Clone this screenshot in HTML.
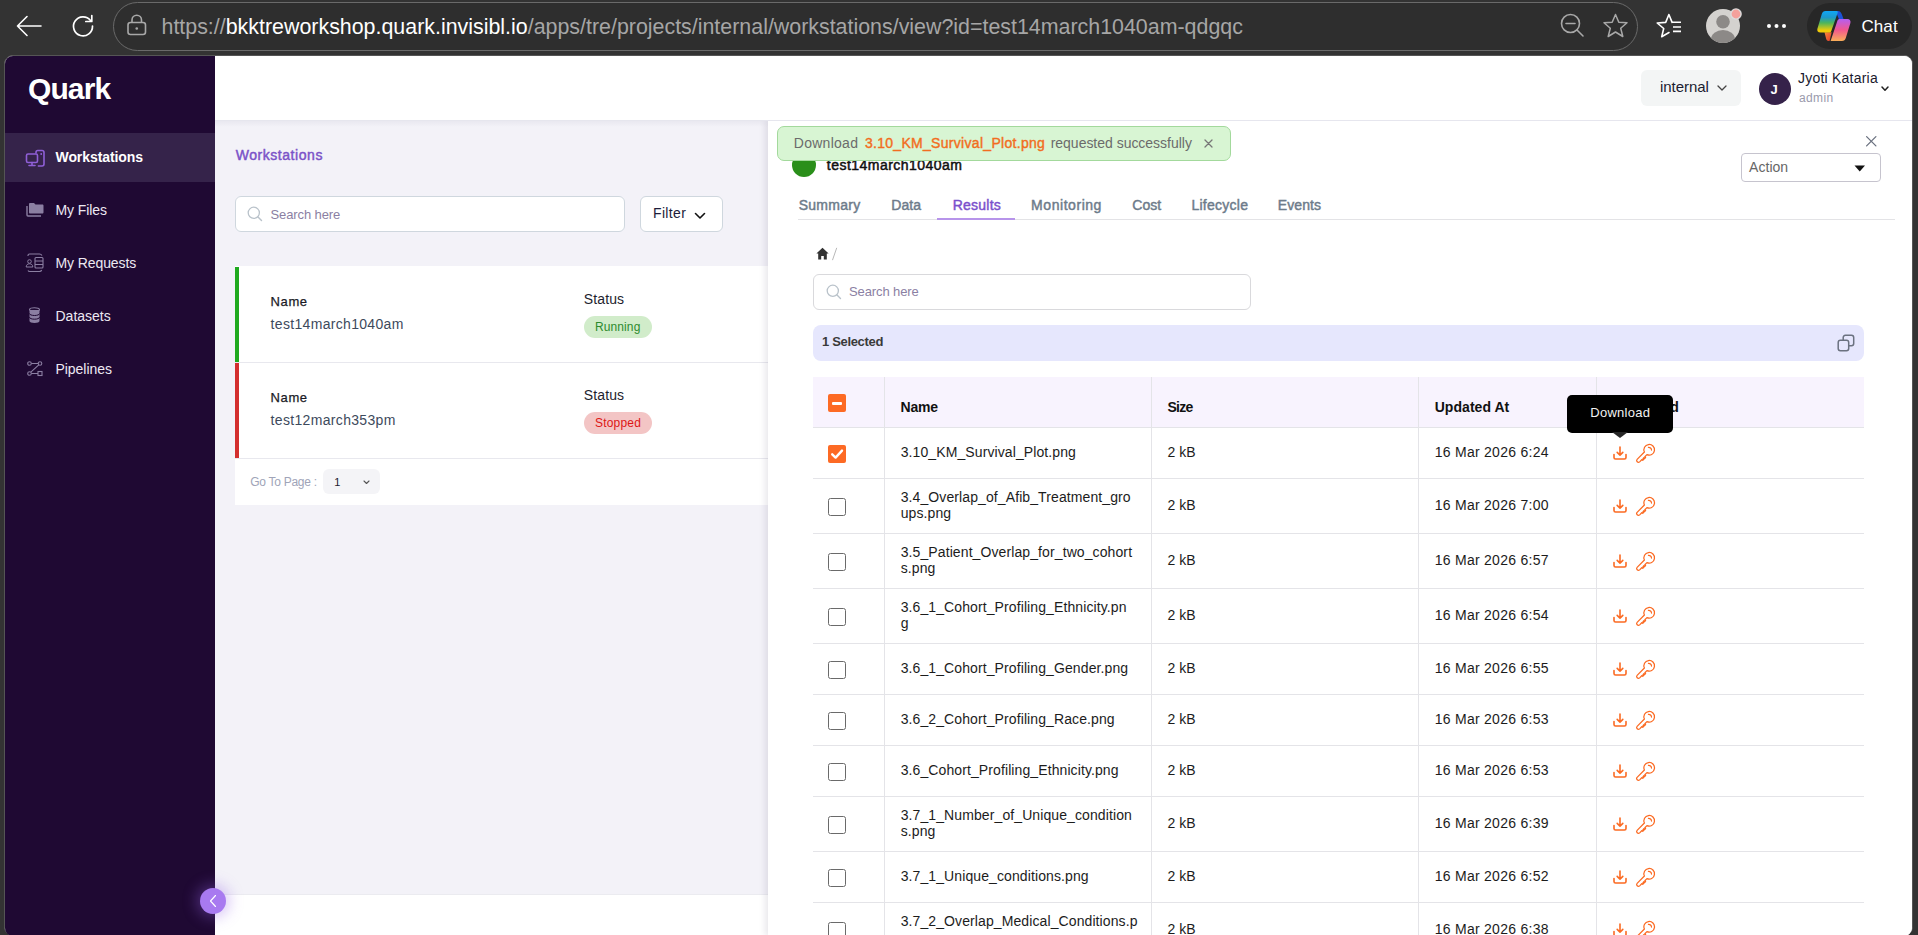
<!DOCTYPE html>
<html><head><meta charset="utf-8"><style>
html,body{margin:0;padding:0;}
body{width:1918px;height:935px;position:relative;overflow:hidden;background:#333333;font-family:"Liberation Sans", sans-serif;}
.t{position:absolute;line-height:1;white-space:pre;}
svg{overflow:visible}
</style></head><body>
<div style="position:absolute;left:0px;top:0px;width:1918px;height:56px;background:#333333"></div><svg style="position:absolute;left:16px;top:15px" width="26" height="22" viewBox="0 0 26 22"><path d="M1.5 11 H25 M11 1.5 L1.5 11 L11 20.5" fill="none" stroke="#ffffff" stroke-width="1.6" stroke-linecap="round" stroke-linejoin="round"/></svg><svg style="position:absolute;left:71px;top:14px" width="24" height="24" viewBox="0 0 24 24"><path d="M19.5 6.5 A9.5 9.5 0 1 0 21.5 12" fill="none" stroke="#ffffff" stroke-width="1.7" stroke-linecap="round"/><path d="M20.8 1.5 V7.5 H14.8" fill="none" stroke="#ffffff" stroke-width="1.7" stroke-linecap="round" stroke-linejoin="round"/></svg><div style="position:absolute;left:113px;top:2px;width:1525px;height:48.5px;box-sizing:border-box;border:1.8px solid #6a6a6a;border-radius:24.5px;background:#2e2e2e"></div><svg style="position:absolute;left:127px;top:14px" width="20" height="22" viewBox="0 0 20 22"><rect x="1" y="8.5" width="17.5" height="12" rx="2.5" fill="none" stroke="#a8a8a8" stroke-width="1.6"/><path d="M5 8.5 V6 A4.75 4.75 0 0 1 14.5 6 V8.5" fill="none" stroke="#a8a8a8" stroke-width="1.6"/><circle cx="9.75" cy="14.5" r="1.3" fill="#a8a8a8"/></svg><div class="t" style="left:161.5px;top:16.68px;font-size:21.4px;color:#a6a6a6;font-weight:400;letter-spacing:0px;"><span style="color:#a6a6a6">https://</span><span style="color:#ffffff">bkktreworkshop.quark.invisibl.io</span><span style="color:#a6a6a6">/apps/tre/projects/internal/workstations/view?id=test14march1040am-qdgqc</span></div><svg style="position:absolute;left:1560px;top:13px" width="26" height="26" viewBox="0 0 26 26"><circle cx="10.5" cy="10.5" r="9" fill="none" stroke="#a8a8a8" stroke-width="1.6"/><path d="M6 10.5 H15 M17 17 L23 23" fill="none" stroke="#a8a8a8" stroke-width="1.6" stroke-linecap="round"/></svg><svg style="position:absolute;left:1602px;top:13px" width="27" height="26" viewBox="0 0 27 26"><path d="M13.5 1.5 L16.8 9.2 L25 9.8 L18.7 15.2 L20.8 23.5 L13.5 19 L6.2 23.5 L8.3 15.2 L2 9.8 L10.2 9.2 Z" fill="none" stroke="#a8a8a8" stroke-width="1.5" stroke-linejoin="round"/></svg><svg style="position:absolute;left:1650px;top:10px" width="36" height="32" viewBox="0 0 36 32"><path d="M22.1 12.35 L18.9 4.5 L15.7 12.35 L7.2 13 L13.7 18.5 L11.7 26.75 L19 22.5" fill="none" stroke="#ffffff" stroke-width="1.6" stroke-linejoin="round" stroke-linecap="round"/><path d="M22 12.3 H31 M23 17 H31 M23 21.4 H31" stroke="#ffffff" stroke-width="1.6"/></svg><svg style="position:absolute;left:1705px;top:8px" width="36" height="36" viewBox="0 0 36 36"><defs><clipPath id="avc"><circle cx="18" cy="18" r="17"/></clipPath></defs><circle cx="18" cy="18" r="17" fill="#d4d2cf"/><g clip-path="url(#avc)"><circle cx="18" cy="13.8" r="6.8" fill="#8c8987"/><ellipse cx="18" cy="31.5" rx="12" ry="9.5" fill="#8c8987"/></g><circle cx="31" cy="6" r="5.8" fill="#dcdcdc"/><circle cx="31" cy="6" r="4.4" fill="#f4a19c"/></svg><svg style="position:absolute;left:1766px;top:23px" width="22" height="6" viewBox="0 0 22 6"><circle cx="3" cy="3" r="2" fill="#fff"/><circle cx="10.5" cy="3" r="2" fill="#fff"/><circle cx="18" cy="3" r="2" fill="#fff"/></svg><div style="position:absolute;left:1807px;top:3px;width:105px;height:46px;background:#272727;border-radius:23px"></div><svg style="position:absolute;left:1812px;top:6px" width="44" height="40" viewBox="0 0 44 40"><defs>
<linearGradient id="cg1" x1="0" y1="0" x2="0" y2="1"><stop offset="0" stop-color="#10a6f6"/><stop offset="0.3" stop-color="#1d98c9"/><stop offset="0.55" stop-color="#4db55c"/><stop offset="0.9" stop-color="#f2cc08"/></linearGradient>
<linearGradient id="cg2" x1="0" y1="0" x2="0" y2="1"><stop offset="0" stop-color="#b45ef2"/><stop offset="0.5" stop-color="#f2588e"/><stop offset="1" stop-color="#f9ae58"/></linearGradient>
<linearGradient id="cg3" x1="0" y1="0" x2="1" y2="1"><stop offset="0" stop-color="#fb8a3c"/><stop offset="1" stop-color="#e23a2a"/></linearGradient>
</defs>
<path d="M23.8 5 H26 C28 5 29.2 6.5 30 8.8 L31.6 13.2 H27 L24.6 7.4 Z" fill="#1c52d8"/>
<path d="M12.5 26.3 H19.6 L17.6 35 H16.6 C15.3 35 14.6 34.3 14.2 33 Z" fill="url(#cg3)"/>
<path d="M13.5 5 H24.5 C25.5 5 26 5.8 25.7 6.8 L19.3 25 C18.9 26 18 26.6 17 26.6 H8.5 C6 26.6 4.8 24.8 5.4 22.8 L9.8 8 C10.4 6 11.6 5 13.5 5 Z" fill="url(#cg1)"/>
<path d="M28 13 H35.5 C37.8 13 39 14.8 38.4 17 L33.8 32 C33.2 34 32 35 30 35 H18.6 L25.5 14.5 C25.8 13.6 26.6 13 28 13 Z" fill="url(#cg2)"/></svg><div class="t" style="left:1861.4px;top:18.21px;font-size:17px;color:#ffffff;font-weight:400;letter-spacing:0.1px;">Chat</div><div style="position:absolute;left:4px;top:55px;width:1909px;height:881px;box-sizing:border-box;border:1px solid #555555;border-radius:9px;background:#ffffff"></div><div style="position:absolute;left:0;top:0;width:1918px;height:935px;clip-path:inset(56px 6px -1px 5px round 8px)"><div style="position:absolute;left:5px;top:56px;width:210px;height:880px;background:#1f0933"></div><div class="t" style="left:28.0px;top:73.61px;font-size:30px;color:#ffffff;font-weight:700;letter-spacing:-0.9px;">Quark</div><div style="position:absolute;left:5px;top:133px;width:210px;height:49px;background:#35234a"></div><svg style="position:absolute;left:25px;top:149px" width="21" height="18" viewBox="0 0 21 18"><rect x="1.5" y="5" width="11" height="8.5" rx="1.5" fill="none" stroke="#8f5fd6" stroke-width="1.6"/><path d="M7 13.5 V16 M4 16.5 H10" stroke="#8f5fd6" stroke-width="1.6" stroke-linecap="round"/><path d="M11 4.6 V3.2 C11 2.2 11.7 1.5 12.7 1.5 H17 C18.3 1.5 19 2.2 19 3.5 V15 C19 16.3 18.3 17 17 17 H12.8" fill="none" stroke="#8f5fd6" stroke-width="1.6"/><rect x="15.5" y="4" width="1.4" height="2" fill="#8f5fd6"/></svg><div class="t" style="left:55.5px;top:150.15px;font-size:14px;color:#ffffff;font-weight:700;letter-spacing:-0.08px;">Workstations</div><svg style="position:absolute;left:26px;top:202px" width="18" height="15" viewBox="0 0 18 15"><path d="M4 1 H8 L9.5 2.5 H16.5 C17 2.5 17.5 3 17.5 3.5 V10.5 C17.5 11 17 11.5 16.5 11.5 H4 C3.5 11.5 3 11 3 10.5 V2 C3 1.5 3.5 1 4 1 Z" fill="#8b7fa2"/><path d="M1 4 V13 C1 13.6 1.4 14 2 14 H15" fill="none" stroke="#8b7fa2" stroke-width="1.4"/></svg><div class="t" style="left:55.5px;top:203.15px;font-size:14px;color:#ece8f2;font-weight:400;letter-spacing:-0.08px;">My Files</div><svg style="position:absolute;left:25px;top:253px" width="20" height="19" viewBox="0 0 20 19"><path d="M3 3 V2.5 C3 1.7 3.7 1 4.5 1 H14.5 C15.5 1 16.5 1.7 17 2.5" fill="none" stroke="#8b7fa2" stroke-width="1.1"/><path d="M3 17.5 C3.3 18.2 4 18.5 4.8 18.5 H14.5 C15.5 18.5 16.3 18 16.7 17" fill="none" stroke="#8b7fa2" stroke-width="1.1"/><circle cx="4.5" cy="8.5" r="1.8" fill="none" stroke="#8b7fa2" stroke-width="1"/><path d="M1.2 14 C1.2 11.8 2.7 10.8 4.5 10.8 C6.3 10.8 7.8 11.8 7.8 14 Z" fill="none" stroke="#8b7fa2" stroke-width="1"/><rect x="10" y="4.5" width="8" height="10.5" rx="1" fill="none" stroke="#8b7fa2" stroke-width="1.1"/><path d="M10 8 H18 M10 11.5 H18" stroke="#8b7fa2" stroke-width="1.1"/></svg><div class="t" style="left:55.5px;top:256.15px;font-size:14px;color:#ece8f2;font-weight:400;letter-spacing:-0.1px;">My Requests</div><svg style="position:absolute;left:28px;top:307px" width="13" height="17" viewBox="0 0 13 17"><ellipse cx="6.5" cy="2.5" rx="5" ry="1.8" fill="none" stroke="#8b7fa2" stroke-width="1.1"/><path d="M1.5 3 V14 C1.5 15.2 3.7 16 6.5 16 C9.3 16 11.5 15.2 11.5 14 V3" fill="#8b7fa2"/><path d="M1.5 6.5 C1.5 7.7 3.7 8.5 6.5 8.5 C9.3 8.5 11.5 7.7 11.5 6.5 M1.5 10.2 C1.5 11.4 3.7 12.2 6.5 12.2 C9.3 12.2 11.5 11.4 11.5 10.2" fill="none" stroke="#1f0933" stroke-width="1"/></svg><div class="t" style="left:55.5px;top:309.15px;font-size:14px;color:#ece8f2;font-weight:400;letter-spacing:0px;">Datasets</div><svg style="position:absolute;left:27px;top:361px" width="16" height="16" viewBox="0 0 16 16"><circle cx="2.5" cy="2.5" r="1.8" fill="none" stroke="#8b7fa2" stroke-width="1.1"/><circle cx="13" cy="2.5" r="1.8" fill="none" stroke="#8b7fa2" stroke-width="1.1"/><circle cx="2.5" cy="12.5" r="1.8" fill="none" stroke="#8b7fa2" stroke-width="1.1"/><rect x="11" y="10.5" width="4" height="4" fill="none" stroke="#8b7fa2" stroke-width="1.1"/><path d="M4.3 2.5 H11.2 M11.8 3.8 L3.8 11.2 M4.3 12.5 H11" stroke="#8b7fa2" stroke-width="1.1"/></svg><div class="t" style="left:55.5px;top:362.15px;font-size:14px;color:#ece8f2;font-weight:400;letter-spacing:-0.05px;">Pipelines</div><div style="position:absolute;left:215px;top:121px;width:553px;height:773px;background:#f3f2f8"></div><div style="position:absolute;left:215px;top:121px;width:553px;height:6px;background:linear-gradient(#e9e8f0,rgba(243,242,248,0))"></div><div style="position:absolute;left:215px;top:894px;width:553px;height:41px;background:#ffffff;border-top:1px solid #ebebf0"></div><div class="t" style="left:235.7px;top:147.95px;font-size:14px;color:#7b52c8;font-weight:400;letter-spacing:0.55px;-webkit-text-stroke:0.45px currentColor;">Workstations</div><div style="position:absolute;left:235px;top:196px;width:390px;height:36px;box-sizing:border-box;background:#fff;border:1px solid #cfd7de;border-radius:6px"></div><svg style="position:absolute;left:247px;top:206px" width="16" height="16" viewBox="0 0 16 16"><circle cx="6.8" cy="6.8" r="5.6" fill="none" stroke="#b9c2ca" stroke-width="1.3"/><path d="M11 11 L14.5 14.5" stroke="#b9c2ca" stroke-width="1.4" stroke-linecap="round"/></svg><div class="t" style="left:270.5px;top:208.10px;font-size:13px;color:#8b7fa3;font-weight:400;letter-spacing:-0.1px;">Search here</div><div style="position:absolute;left:640px;top:196px;width:83px;height:36px;box-sizing:border-box;background:#fff;border:1px solid #cfd7de;border-radius:6px"></div><div class="t" style="left:653.0px;top:206.35px;font-size:14px;color:#1c1c3a;font-weight:400;letter-spacing:0.35px;">Filter</div><svg style="position:absolute;left:694px;top:212px" width="12" height="8" viewBox="0 0 12 8"><path d="M1.5 1.5 L6 6 L10.5 1.5" fill="none" stroke="#111" stroke-width="1.6" stroke-linecap="round" stroke-linejoin="round"/></svg><div style="position:absolute;left:235px;top:266px;width:533px;height:239px;background:#ffffff"></div><div style="position:absolute;left:235px;top:266.5px;width:4px;height:95.5px;background:#1faa1f"></div><div style="position:absolute;left:235px;top:362px;width:533px;height:1px;background:#e8e8ee"></div><div style="position:absolute;left:235px;top:363px;width:4px;height:95px;background:#d32f2f"></div><div style="position:absolute;left:235px;top:458px;width:533px;height:1px;background:#e8e8ee"></div><div class="t" style="left:270.6px;top:295.00px;font-size:13px;color:#1a1a26;font-weight:400;letter-spacing:0.6px;-webkit-text-stroke:0.25px currentColor;">Name</div><div class="t" style="left:270.6px;top:316.95px;font-size:14px;color:#3d4a5c;font-weight:400;letter-spacing:0.32px;">test14march1040am</div><div class="t" style="left:583.8px;top:292.25px;font-size:14px;color:#1e1e2e;font-weight:400;letter-spacing:0.12px;">Status</div><div style="position:absolute;left:584px;top:316px;width:68px;height:22px;background:#d1ecca;border-radius:11px"></div><div class="t" style="left:595.0px;top:320.84px;font-size:12px;color:#2e8b2e;font-weight:400;letter-spacing:0.1px;">Running</div><div class="t" style="left:270.6px;top:391.30px;font-size:13px;color:#1a1a26;font-weight:400;letter-spacing:0.6px;-webkit-text-stroke:0.25px currentColor;">Name</div><div class="t" style="left:270.6px;top:413.45px;font-size:14px;color:#3d4a5c;font-weight:400;letter-spacing:0.33px;">test12march353pm</div><div class="t" style="left:583.8px;top:388.15px;font-size:14px;color:#1e1e2e;font-weight:400;letter-spacing:0.12px;">Status</div><div style="position:absolute;left:584px;top:412px;width:68px;height:22px;background:#f3c5c5;border-radius:11px"></div><div class="t" style="left:595.0px;top:416.84px;font-size:12px;color:#dd1515;font-weight:400;letter-spacing:0.2px;">Stopped</div><div class="t" style="left:250.3px;top:475.84px;font-size:12px;color:#a0a4b8;font-weight:400;letter-spacing:-0.28px;">Go To Page :</div><div style="position:absolute;left:323px;top:469px;width:57px;height:25px;background:#f4f4f7;border-radius:6px"></div><div class="t" style="left:334.3px;top:477.19px;font-size:11px;color:#1e2030;font-weight:400;letter-spacing:0px;">1</div><svg style="position:absolute;left:362.5px;top:480px" width="7" height="5" viewBox="0 0 7 5"><path d="M1 1 L3.5 3.5 L6 1" fill="none" stroke="#555" stroke-width="1.1" stroke-linecap="round" stroke-linejoin="round"/></svg><div style="position:absolute;left:200px;top:888px;width:26px;height:26px;background:#a87af0;border-radius:50%;box-shadow:0 0 14px 4px rgba(150,100,230,0.35)"></div><svg style="position:absolute;left:209px;top:894px" width="10" height="14" viewBox="0 0 10 14"><path d="M6.5 1.5 L1.5 7 L6.5 12.5" fill="none" stroke="#fff" stroke-width="1.15" stroke-linecap="round" stroke-linejoin="round"/></svg><div style="position:absolute;left:768px;top:121px;width:1145px;height:815px;background:#ffffff;box-shadow:-3px 0 6px rgba(40,30,70,0.10)"></div><div style="position:absolute;left:792px;top:153px;width:24px;height:24px;background:#2a8f1a;border-radius:50%"></div><div class="t" style="left:826.8px;top:157.85px;font-size:14px;color:#111111;font-weight:400;letter-spacing:0.47px;-webkit-text-stroke:0.5px currentColor;">test14march1040am</div><div style="position:absolute;left:777px;top:126px;width:454px;height:35px;box-sizing:border-box;background:#d8f5d3;border:1px solid #a3d99c;border-radius:7px"></div><div class="t" style="left:793.8px;top:136.15px;font-size:14px;color:#6b6b6b;font-weight:400;letter-spacing:0.27px;">Download</div><div class="t" style="left:864.9px;top:136.15px;font-size:14px;color:#f26d21;font-weight:400;letter-spacing:0.3px;-webkit-text-stroke:0.4px currentColor;">3.10_KM_Survival_Plot.png</div><div class="t" style="left:1050.7px;top:136.15px;font-size:14px;color:#6b6b6b;font-weight:400;letter-spacing:-0.02px;">requested successfully</div><svg style="position:absolute;left:1204px;top:139px" width="9" height="9" viewBox="0 0 9 9"><path d="M1 1 L8 8 M8 1 L1 8" stroke="#777" stroke-width="1.3" stroke-linecap="round"/></svg><svg style="position:absolute;left:1866px;top:136px" width="11" height="11" viewBox="0 0 11 11"><path d="M0.6 0.6 L9.9 9.9 M9.9 0.6 L0.6 9.9" stroke="#6b7280" stroke-width="1.3" stroke-linecap="round"/></svg><div style="position:absolute;left:1741px;top:153px;width:140px;height:29px;box-sizing:border-box;border:1px solid #c6c4ce;border-radius:4px;background:#fff"></div><div class="t" style="left:1749.0px;top:159.95px;font-size:14px;color:#666666;font-weight:400;letter-spacing:0.05px;">Action</div><svg style="position:absolute;left:1854px;top:165px" width="12" height="7" viewBox="0 0 12 7"><path d="M0.5 0.5 H11 L5.75 6.5 Z" fill="#111"/></svg><div style="position:absolute;left:798px;top:219px;width:1097px;height:1px;background:#e3e3e6"></div><div class="t" style="left:798.7px;top:198.25px;font-size:14px;color:#6d7b8a;font-weight:400;letter-spacing:0.28px;-webkit-text-stroke:0.45px currentColor;">Summary</div><div class="t" style="left:891.2px;top:198.25px;font-size:14px;color:#6d7b8a;font-weight:400;letter-spacing:0.1px;-webkit-text-stroke:0.45px currentColor;">Data</div><div class="t" style="left:952.7px;top:198.25px;font-size:14px;color:#7b50cc;font-weight:400;letter-spacing:0.25px;-webkit-text-stroke:0.45px currentColor;">Results</div><div class="t" style="left:1031.1px;top:198.25px;font-size:14px;color:#6d7b8a;font-weight:400;letter-spacing:0.55px;-webkit-text-stroke:0.45px currentColor;">Monitoring</div><div class="t" style="left:1132.3px;top:198.25px;font-size:14px;color:#6d7b8a;font-weight:400;letter-spacing:0.05px;-webkit-text-stroke:0.45px currentColor;">Cost</div><div class="t" style="left:1191.4px;top:198.25px;font-size:14px;color:#6d7b8a;font-weight:400;letter-spacing:0.27px;-webkit-text-stroke:0.45px currentColor;">Lifecycle</div><div class="t" style="left:1277.8px;top:198.25px;font-size:14px;color:#6d7b8a;font-weight:400;letter-spacing:0.1px;-webkit-text-stroke:0.45px currentColor;">Events</div><div style="position:absolute;left:937px;top:218px;width:78px;height:2px;background:#b794ea"></div><svg style="position:absolute;left:816px;top:247px" width="13" height="13" viewBox="0 0 13 13"><path d="M6.5 0.8 L12.6 6.6 H10.8 V12.5 H7.8 V9 H5.2 V12.5 H2.2 V6.6 H0.4 Z" fill="#333"/></svg><svg style="position:absolute;left:831px;top:247px" width="7" height="14" viewBox="0 0 7 14"><path d="M5.6 1.2 L1.6 12.8" stroke="#b8b8b8" stroke-width="1" stroke-linecap="round"/></svg><div style="position:absolute;left:813px;top:274px;width:438px;height:36px;box-sizing:border-box;border:1px solid #d9d9dc;border-radius:6px;background:#fff"></div><svg style="position:absolute;left:826px;top:284px" width="16" height="16" viewBox="0 0 16 16"><circle cx="6.8" cy="6.8" r="5.6" fill="none" stroke="#b9c2ca" stroke-width="1.3"/><path d="M11 11 L14.5 14.5" stroke="#b9c2ca" stroke-width="1.4" stroke-linecap="round"/></svg><div class="t" style="left:849.0px;top:285.00px;font-size:13px;color:#8b7fa3;font-weight:400;letter-spacing:-0.1px;">Search here</div><div style="position:absolute;left:813px;top:325px;width:1051px;height:36px;background:#e6e7fd;border-radius:8px"></div><div class="t" style="left:822.0px;top:335.00px;font-size:13px;color:#3a3a3a;font-weight:700;letter-spacing:-0.33px;">1 Selected</div><svg style="position:absolute;left:1837px;top:334px" width="18" height="18" viewBox="0 0 18 18"><rect x="1.2" y="6.2" width="10.5" height="10.5" rx="2.2" fill="none" stroke="#6b7280" stroke-width="1.5"/><path d="M6.2 6.2 V3.5 C6.2 2.3 7 1.2 8.4 1.2 H14.5 C15.8 1.2 16.7 2.2 16.7 3.5 V9.5 C16.7 10.8 15.8 11.7 14.5 11.7 H11.7" fill="none" stroke="#6b7280" stroke-width="1.5"/></svg><div style="position:absolute;left:215px;top:56px;width:1698px;height:64px;background:#ffffff;border-bottom:1px solid #e6e6ee"></div><div style="position:absolute;left:1641px;top:70px;width:100px;height:36px;background:#f3f5f5;border-radius:6px"></div><div class="t" style="left:1660.0px;top:79.10px;font-size:15px;color:#1c1c30;font-weight:400;letter-spacing:-0.05px;">internal</div><svg style="position:absolute;left:1717px;top:85px" width="10" height="6" viewBox="0 0 10 6"><path d="M1 1 L5 5 L9 1" fill="none" stroke="#444" stroke-width="1.3" stroke-linecap="round" stroke-linejoin="round"/></svg><div style="position:absolute;left:1759px;top:73px;width:32px;height:32px;background:#35224a;border-radius:50%"></div><div class="t" style="left:1770.5px;top:83.00px;font-size:13px;color:#ffffff;font-weight:700;letter-spacing:0px;">J</div><div class="t" style="left:1798.0px;top:70.75px;font-size:14px;color:#1a1a2e;font-weight:400;letter-spacing:0.22px;">Jyoti Kataria</div><div class="t" style="left:1799.0px;top:92.14px;font-size:12px;color:#9a9aac;font-weight:400;letter-spacing:0.35px;">admin</div><svg style="position:absolute;left:1881px;top:86px" width="8" height="6" viewBox="0 0 8 6"><path d="M1 1 L4 4.3 L7 1" fill="none" stroke="#222" stroke-width="1.5" stroke-linecap="round" stroke-linejoin="round"/></svg><div style="position:absolute;left:813px;top:377px;width:1051px;height:50px;background:#f8f3fe"></div><div style="position:absolute;left:813px;top:427px;width:1051px;height:1px;background:#e4e4e8"></div><div style="position:absolute;left:813px;top:478px;width:1051px;height:1px;background:#e4e4e8"></div><div style="position:absolute;left:813px;top:533px;width:1051px;height:1px;background:#e4e4e8"></div><div style="position:absolute;left:813px;top:588px;width:1051px;height:1px;background:#e4e4e8"></div><div style="position:absolute;left:813px;top:643px;width:1051px;height:1px;background:#e4e4e8"></div><div style="position:absolute;left:813px;top:694px;width:1051px;height:1px;background:#e4e4e8"></div><div style="position:absolute;left:813px;top:745px;width:1051px;height:1px;background:#e4e4e8"></div><div style="position:absolute;left:813px;top:796px;width:1051px;height:1px;background:#e4e4e8"></div><div style="position:absolute;left:813px;top:851px;width:1051px;height:1px;background:#e4e4e8"></div><div style="position:absolute;left:813px;top:902px;width:1051px;height:1px;background:#e4e4e8"></div><div style="position:absolute;left:884px;top:377px;width:1px;height:558px;background:#e4e4e8"></div><div style="position:absolute;left:1151px;top:377px;width:1px;height:558px;background:#e4e4e8"></div><div style="position:absolute;left:1418px;top:377px;width:1px;height:558px;background:#e4e4e8"></div><div style="position:absolute;left:1596px;top:377px;width:1px;height:558px;background:#e4e4e8"></div><div style="position:absolute;left:828px;top:394px;width:18px;height:18px;background:#fd6a24;border-radius:2px"></div><div style="position:absolute;left:832px;top:402px;width:10px;height:2.5px;background:#fff;border-radius:1px"></div><div class="t" style="left:900.5px;top:400.15px;font-size:14px;color:#111111;font-weight:700;letter-spacing:-0.2px;">Name</div><div class="t" style="left:1167.5px;top:400.15px;font-size:14px;color:#111111;font-weight:700;letter-spacing:-0.75px;">Size</div><div class="t" style="left:1434.7px;top:400.15px;font-size:14px;color:#111111;font-weight:700;letter-spacing:0.05px;">Updated At</div><div class="t" style="left:1612.5px;top:400.15px;font-size:14px;color:#111111;font-weight:700;letter-spacing:-0.1px;">Download</div><div style="position:absolute;left:828px;top:445px;width:18px;height:18px;background:#fd6a24;border-radius:2px"></div><svg style="position:absolute;left:830px;top:447px" width="14" height="14" viewBox="0 0 14 14"><path d="M2.2 7.3 L5.6 10.6 L12 3.6" fill="none" stroke="#fff" stroke-width="2.4" stroke-linecap="round" stroke-linejoin="round"/></svg><div class="t" style="left:900.7px;top:444.65px;font-size:14px;color:#1c1c1c;font-weight:400;letter-spacing:0.1px;">3.10_KM_Survival_Plot.png</div><div class="t" style="left:1167.5px;top:444.65px;font-size:14px;color:#1c1c1c;font-weight:400;letter-spacing:0px;">2 kB</div><div class="t" style="left:1434.7px;top:444.65px;font-size:14px;color:#1c1c1c;font-weight:400;letter-spacing:0.27px;">16 Mar 2026 6:24</div><svg style="position:absolute;left:1613px;top:446px" width="14" height="14" viewBox="0 0 14 14"><path d="M7 1 V9.2 M4.2 6.4 L7 9.2 L9.8 6.4" fill="none" stroke="#fb6a22" stroke-width="1.6" stroke-linecap="round" stroke-linejoin="round"/><path d="M1 8.5 V11.5 C1 12.4 1.6 13 2.5 13 H11.5 C12.4 13 13 12.4 13 11.5 V8.5" fill="none" stroke="#fb6a22" stroke-width="1.6" stroke-linecap="round"/></svg><svg style="position:absolute;left:1636px;top:443px" width="20" height="20" viewBox="0 0 20 20"><path d="M8.40 9.05 A5.3 5.3 0 1 1 10.95 11.60 L8.82 13.73 L9.59 14.51 L8.60 15.50 L7.83 14.72 L6.98 15.57 L7.76 16.35 L6.77 17.34 L5.99 16.56 L3.65 18.89 A1.8 1.8 0 0 1 1.11 16.35 Z" fill="none" stroke="#fb6a22" stroke-width="1.25" stroke-linejoin="round"/><path d="M12.4 4.3 A2.9 2.9 0 0 1 15.5 7.1" fill="none" stroke="#fb6a22" stroke-width="1.2" stroke-linecap="round"/></svg><div style="position:absolute;left:828px;top:498px;width:18px;height:18px;box-sizing:border-box;border:1.2px solid #6a6a6a;border-radius:2.5px;background:#fff"></div><div class="t" style="left:900.7px;top:489.65px;font-size:14px;color:#1c1c1c;font-weight:400;letter-spacing:0.1px;">3.4_Overlap_of_Afib_Treatment_gro</div><div class="t" style="left:900.7px;top:505.65px;font-size:14px;color:#1c1c1c;font-weight:400;letter-spacing:0.1px;">ups.png</div><div class="t" style="left:1167.5px;top:497.65px;font-size:14px;color:#1c1c1c;font-weight:400;letter-spacing:0px;">2 kB</div><div class="t" style="left:1434.7px;top:497.65px;font-size:14px;color:#1c1c1c;font-weight:400;letter-spacing:0.27px;">16 Mar 2026 7:00</div><svg style="position:absolute;left:1613px;top:499px" width="14" height="14" viewBox="0 0 14 14"><path d="M7 1 V9.2 M4.2 6.4 L7 9.2 L9.8 6.4" fill="none" stroke="#fb6a22" stroke-width="1.6" stroke-linecap="round" stroke-linejoin="round"/><path d="M1 8.5 V11.5 C1 12.4 1.6 13 2.5 13 H11.5 C12.4 13 13 12.4 13 11.5 V8.5" fill="none" stroke="#fb6a22" stroke-width="1.6" stroke-linecap="round"/></svg><svg style="position:absolute;left:1636px;top:496px" width="20" height="20" viewBox="0 0 20 20"><path d="M8.40 9.05 A5.3 5.3 0 1 1 10.95 11.60 L8.82 13.73 L9.59 14.51 L8.60 15.50 L7.83 14.72 L6.98 15.57 L7.76 16.35 L6.77 17.34 L5.99 16.56 L3.65 18.89 A1.8 1.8 0 0 1 1.11 16.35 Z" fill="none" stroke="#fb6a22" stroke-width="1.25" stroke-linejoin="round"/><path d="M12.4 4.3 A2.9 2.9 0 0 1 15.5 7.1" fill="none" stroke="#fb6a22" stroke-width="1.2" stroke-linecap="round"/></svg><div style="position:absolute;left:828px;top:553px;width:18px;height:18px;box-sizing:border-box;border:1.2px solid #6a6a6a;border-radius:2.5px;background:#fff"></div><div class="t" style="left:900.7px;top:544.65px;font-size:14px;color:#1c1c1c;font-weight:400;letter-spacing:0.1px;">3.5_Patient_Overlap_for_two_cohort</div><div class="t" style="left:900.7px;top:560.65px;font-size:14px;color:#1c1c1c;font-weight:400;letter-spacing:0.1px;">s.png</div><div class="t" style="left:1167.5px;top:552.65px;font-size:14px;color:#1c1c1c;font-weight:400;letter-spacing:0px;">2 kB</div><div class="t" style="left:1434.7px;top:552.65px;font-size:14px;color:#1c1c1c;font-weight:400;letter-spacing:0.27px;">16 Mar 2026 6:57</div><svg style="position:absolute;left:1613px;top:554px" width="14" height="14" viewBox="0 0 14 14"><path d="M7 1 V9.2 M4.2 6.4 L7 9.2 L9.8 6.4" fill="none" stroke="#fb6a22" stroke-width="1.6" stroke-linecap="round" stroke-linejoin="round"/><path d="M1 8.5 V11.5 C1 12.4 1.6 13 2.5 13 H11.5 C12.4 13 13 12.4 13 11.5 V8.5" fill="none" stroke="#fb6a22" stroke-width="1.6" stroke-linecap="round"/></svg><svg style="position:absolute;left:1636px;top:551px" width="20" height="20" viewBox="0 0 20 20"><path d="M8.40 9.05 A5.3 5.3 0 1 1 10.95 11.60 L8.82 13.73 L9.59 14.51 L8.60 15.50 L7.83 14.72 L6.98 15.57 L7.76 16.35 L6.77 17.34 L5.99 16.56 L3.65 18.89 A1.8 1.8 0 0 1 1.11 16.35 Z" fill="none" stroke="#fb6a22" stroke-width="1.25" stroke-linejoin="round"/><path d="M12.4 4.3 A2.9 2.9 0 0 1 15.5 7.1" fill="none" stroke="#fb6a22" stroke-width="1.2" stroke-linecap="round"/></svg><div style="position:absolute;left:828px;top:608px;width:18px;height:18px;box-sizing:border-box;border:1.2px solid #6a6a6a;border-radius:2.5px;background:#fff"></div><div class="t" style="left:900.7px;top:599.65px;font-size:14px;color:#1c1c1c;font-weight:400;letter-spacing:0.1px;">3.6_1_Cohort_Profiling_Ethnicity.pn</div><div class="t" style="left:900.7px;top:615.65px;font-size:14px;color:#1c1c1c;font-weight:400;letter-spacing:0.1px;">g</div><div class="t" style="left:1167.5px;top:607.65px;font-size:14px;color:#1c1c1c;font-weight:400;letter-spacing:0px;">2 kB</div><div class="t" style="left:1434.7px;top:607.65px;font-size:14px;color:#1c1c1c;font-weight:400;letter-spacing:0.27px;">16 Mar 2026 6:54</div><svg style="position:absolute;left:1613px;top:609px" width="14" height="14" viewBox="0 0 14 14"><path d="M7 1 V9.2 M4.2 6.4 L7 9.2 L9.8 6.4" fill="none" stroke="#fb6a22" stroke-width="1.6" stroke-linecap="round" stroke-linejoin="round"/><path d="M1 8.5 V11.5 C1 12.4 1.6 13 2.5 13 H11.5 C12.4 13 13 12.4 13 11.5 V8.5" fill="none" stroke="#fb6a22" stroke-width="1.6" stroke-linecap="round"/></svg><svg style="position:absolute;left:1636px;top:606px" width="20" height="20" viewBox="0 0 20 20"><path d="M8.40 9.05 A5.3 5.3 0 1 1 10.95 11.60 L8.82 13.73 L9.59 14.51 L8.60 15.50 L7.83 14.72 L6.98 15.57 L7.76 16.35 L6.77 17.34 L5.99 16.56 L3.65 18.89 A1.8 1.8 0 0 1 1.11 16.35 Z" fill="none" stroke="#fb6a22" stroke-width="1.25" stroke-linejoin="round"/><path d="M12.4 4.3 A2.9 2.9 0 0 1 15.5 7.1" fill="none" stroke="#fb6a22" stroke-width="1.2" stroke-linecap="round"/></svg><div style="position:absolute;left:828px;top:661px;width:18px;height:18px;box-sizing:border-box;border:1.2px solid #6a6a6a;border-radius:2.5px;background:#fff"></div><div class="t" style="left:900.7px;top:660.65px;font-size:14px;color:#1c1c1c;font-weight:400;letter-spacing:0.1px;">3.6_1_Cohort_Profiling_Gender.png</div><div class="t" style="left:1167.5px;top:660.65px;font-size:14px;color:#1c1c1c;font-weight:400;letter-spacing:0px;">2 kB</div><div class="t" style="left:1434.7px;top:660.65px;font-size:14px;color:#1c1c1c;font-weight:400;letter-spacing:0.27px;">16 Mar 2026 6:55</div><svg style="position:absolute;left:1613px;top:662px" width="14" height="14" viewBox="0 0 14 14"><path d="M7 1 V9.2 M4.2 6.4 L7 9.2 L9.8 6.4" fill="none" stroke="#fb6a22" stroke-width="1.6" stroke-linecap="round" stroke-linejoin="round"/><path d="M1 8.5 V11.5 C1 12.4 1.6 13 2.5 13 H11.5 C12.4 13 13 12.4 13 11.5 V8.5" fill="none" stroke="#fb6a22" stroke-width="1.6" stroke-linecap="round"/></svg><svg style="position:absolute;left:1636px;top:659px" width="20" height="20" viewBox="0 0 20 20"><path d="M8.40 9.05 A5.3 5.3 0 1 1 10.95 11.60 L8.82 13.73 L9.59 14.51 L8.60 15.50 L7.83 14.72 L6.98 15.57 L7.76 16.35 L6.77 17.34 L5.99 16.56 L3.65 18.89 A1.8 1.8 0 0 1 1.11 16.35 Z" fill="none" stroke="#fb6a22" stroke-width="1.25" stroke-linejoin="round"/><path d="M12.4 4.3 A2.9 2.9 0 0 1 15.5 7.1" fill="none" stroke="#fb6a22" stroke-width="1.2" stroke-linecap="round"/></svg><div style="position:absolute;left:828px;top:712px;width:18px;height:18px;box-sizing:border-box;border:1.2px solid #6a6a6a;border-radius:2.5px;background:#fff"></div><div class="t" style="left:900.7px;top:711.65px;font-size:14px;color:#1c1c1c;font-weight:400;letter-spacing:0.1px;">3.6_2_Cohort_Profiling_Race.png</div><div class="t" style="left:1167.5px;top:711.65px;font-size:14px;color:#1c1c1c;font-weight:400;letter-spacing:0px;">2 kB</div><div class="t" style="left:1434.7px;top:711.65px;font-size:14px;color:#1c1c1c;font-weight:400;letter-spacing:0.27px;">16 Mar 2026 6:53</div><svg style="position:absolute;left:1613px;top:713px" width="14" height="14" viewBox="0 0 14 14"><path d="M7 1 V9.2 M4.2 6.4 L7 9.2 L9.8 6.4" fill="none" stroke="#fb6a22" stroke-width="1.6" stroke-linecap="round" stroke-linejoin="round"/><path d="M1 8.5 V11.5 C1 12.4 1.6 13 2.5 13 H11.5 C12.4 13 13 12.4 13 11.5 V8.5" fill="none" stroke="#fb6a22" stroke-width="1.6" stroke-linecap="round"/></svg><svg style="position:absolute;left:1636px;top:710px" width="20" height="20" viewBox="0 0 20 20"><path d="M8.40 9.05 A5.3 5.3 0 1 1 10.95 11.60 L8.82 13.73 L9.59 14.51 L8.60 15.50 L7.83 14.72 L6.98 15.57 L7.76 16.35 L6.77 17.34 L5.99 16.56 L3.65 18.89 A1.8 1.8 0 0 1 1.11 16.35 Z" fill="none" stroke="#fb6a22" stroke-width="1.25" stroke-linejoin="round"/><path d="M12.4 4.3 A2.9 2.9 0 0 1 15.5 7.1" fill="none" stroke="#fb6a22" stroke-width="1.2" stroke-linecap="round"/></svg><div style="position:absolute;left:828px;top:763px;width:18px;height:18px;box-sizing:border-box;border:1.2px solid #6a6a6a;border-radius:2.5px;background:#fff"></div><div class="t" style="left:900.7px;top:762.65px;font-size:14px;color:#1c1c1c;font-weight:400;letter-spacing:0.1px;">3.6_Cohort_Profiling_Ethnicity.png</div><div class="t" style="left:1167.5px;top:762.65px;font-size:14px;color:#1c1c1c;font-weight:400;letter-spacing:0px;">2 kB</div><div class="t" style="left:1434.7px;top:762.65px;font-size:14px;color:#1c1c1c;font-weight:400;letter-spacing:0.27px;">16 Mar 2026 6:53</div><svg style="position:absolute;left:1613px;top:764px" width="14" height="14" viewBox="0 0 14 14"><path d="M7 1 V9.2 M4.2 6.4 L7 9.2 L9.8 6.4" fill="none" stroke="#fb6a22" stroke-width="1.6" stroke-linecap="round" stroke-linejoin="round"/><path d="M1 8.5 V11.5 C1 12.4 1.6 13 2.5 13 H11.5 C12.4 13 13 12.4 13 11.5 V8.5" fill="none" stroke="#fb6a22" stroke-width="1.6" stroke-linecap="round"/></svg><svg style="position:absolute;left:1636px;top:761px" width="20" height="20" viewBox="0 0 20 20"><path d="M8.40 9.05 A5.3 5.3 0 1 1 10.95 11.60 L8.82 13.73 L9.59 14.51 L8.60 15.50 L7.83 14.72 L6.98 15.57 L7.76 16.35 L6.77 17.34 L5.99 16.56 L3.65 18.89 A1.8 1.8 0 0 1 1.11 16.35 Z" fill="none" stroke="#fb6a22" stroke-width="1.25" stroke-linejoin="round"/><path d="M12.4 4.3 A2.9 2.9 0 0 1 15.5 7.1" fill="none" stroke="#fb6a22" stroke-width="1.2" stroke-linecap="round"/></svg><div style="position:absolute;left:828px;top:816px;width:18px;height:18px;box-sizing:border-box;border:1.2px solid #6a6a6a;border-radius:2.5px;background:#fff"></div><div class="t" style="left:900.7px;top:807.65px;font-size:14px;color:#1c1c1c;font-weight:400;letter-spacing:0.1px;">3.7_1_Number_of_Unique_condition</div><div class="t" style="left:900.7px;top:823.65px;font-size:14px;color:#1c1c1c;font-weight:400;letter-spacing:0.1px;">s.png</div><div class="t" style="left:1167.5px;top:815.65px;font-size:14px;color:#1c1c1c;font-weight:400;letter-spacing:0px;">2 kB</div><div class="t" style="left:1434.7px;top:815.65px;font-size:14px;color:#1c1c1c;font-weight:400;letter-spacing:0.27px;">16 Mar 2026 6:39</div><svg style="position:absolute;left:1613px;top:817px" width="14" height="14" viewBox="0 0 14 14"><path d="M7 1 V9.2 M4.2 6.4 L7 9.2 L9.8 6.4" fill="none" stroke="#fb6a22" stroke-width="1.6" stroke-linecap="round" stroke-linejoin="round"/><path d="M1 8.5 V11.5 C1 12.4 1.6 13 2.5 13 H11.5 C12.4 13 13 12.4 13 11.5 V8.5" fill="none" stroke="#fb6a22" stroke-width="1.6" stroke-linecap="round"/></svg><svg style="position:absolute;left:1636px;top:814px" width="20" height="20" viewBox="0 0 20 20"><path d="M8.40 9.05 A5.3 5.3 0 1 1 10.95 11.60 L8.82 13.73 L9.59 14.51 L8.60 15.50 L7.83 14.72 L6.98 15.57 L7.76 16.35 L6.77 17.34 L5.99 16.56 L3.65 18.89 A1.8 1.8 0 0 1 1.11 16.35 Z" fill="none" stroke="#fb6a22" stroke-width="1.25" stroke-linejoin="round"/><path d="M12.4 4.3 A2.9 2.9 0 0 1 15.5 7.1" fill="none" stroke="#fb6a22" stroke-width="1.2" stroke-linecap="round"/></svg><div style="position:absolute;left:828px;top:869px;width:18px;height:18px;box-sizing:border-box;border:1.2px solid #6a6a6a;border-radius:2.5px;background:#fff"></div><div class="t" style="left:900.7px;top:868.65px;font-size:14px;color:#1c1c1c;font-weight:400;letter-spacing:0.1px;">3.7_1_Unique_conditions.png</div><div class="t" style="left:1167.5px;top:868.65px;font-size:14px;color:#1c1c1c;font-weight:400;letter-spacing:0px;">2 kB</div><div class="t" style="left:1434.7px;top:868.65px;font-size:14px;color:#1c1c1c;font-weight:400;letter-spacing:0.27px;">16 Mar 2026 6:52</div><svg style="position:absolute;left:1613px;top:870px" width="14" height="14" viewBox="0 0 14 14"><path d="M7 1 V9.2 M4.2 6.4 L7 9.2 L9.8 6.4" fill="none" stroke="#fb6a22" stroke-width="1.6" stroke-linecap="round" stroke-linejoin="round"/><path d="M1 8.5 V11.5 C1 12.4 1.6 13 2.5 13 H11.5 C12.4 13 13 12.4 13 11.5 V8.5" fill="none" stroke="#fb6a22" stroke-width="1.6" stroke-linecap="round"/></svg><svg style="position:absolute;left:1636px;top:867px" width="20" height="20" viewBox="0 0 20 20"><path d="M8.40 9.05 A5.3 5.3 0 1 1 10.95 11.60 L8.82 13.73 L9.59 14.51 L8.60 15.50 L7.83 14.72 L6.98 15.57 L7.76 16.35 L6.77 17.34 L5.99 16.56 L3.65 18.89 A1.8 1.8 0 0 1 1.11 16.35 Z" fill="none" stroke="#fb6a22" stroke-width="1.25" stroke-linejoin="round"/><path d="M12.4 4.3 A2.9 2.9 0 0 1 15.5 7.1" fill="none" stroke="#fb6a22" stroke-width="1.2" stroke-linecap="round"/></svg><div style="position:absolute;left:828px;top:922px;width:18px;height:18px;box-sizing:border-box;border:1.2px solid #6a6a6a;border-radius:2.5px;background:#fff"></div><div class="t" style="left:900.7px;top:913.65px;font-size:14px;color:#1c1c1c;font-weight:400;letter-spacing:0.1px;">3.7_2_Overlap_Medical_Conditions.p</div><div class="t" style="left:1167.5px;top:921.65px;font-size:14px;color:#1c1c1c;font-weight:400;letter-spacing:0px;">2 kB</div><div class="t" style="left:1434.7px;top:921.65px;font-size:14px;color:#1c1c1c;font-weight:400;letter-spacing:0.27px;">16 Mar 2026 6:38</div><svg style="position:absolute;left:1613px;top:923px" width="14" height="14" viewBox="0 0 14 14"><path d="M7 1 V9.2 M4.2 6.4 L7 9.2 L9.8 6.4" fill="none" stroke="#fb6a22" stroke-width="1.6" stroke-linecap="round" stroke-linejoin="round"/><path d="M1 8.5 V11.5 C1 12.4 1.6 13 2.5 13 H11.5 C12.4 13 13 12.4 13 11.5 V8.5" fill="none" stroke="#fb6a22" stroke-width="1.6" stroke-linecap="round"/></svg><svg style="position:absolute;left:1636px;top:920px" width="20" height="20" viewBox="0 0 20 20"><path d="M8.40 9.05 A5.3 5.3 0 1 1 10.95 11.60 L8.82 13.73 L9.59 14.51 L8.60 15.50 L7.83 14.72 L6.98 15.57 L7.76 16.35 L6.77 17.34 L5.99 16.56 L3.65 18.89 A1.8 1.8 0 0 1 1.11 16.35 Z" fill="none" stroke="#fb6a22" stroke-width="1.25" stroke-linejoin="round"/><path d="M12.4 4.3 A2.9 2.9 0 0 1 15.5 7.1" fill="none" stroke="#fb6a22" stroke-width="1.2" stroke-linecap="round"/></svg><div style="position:absolute;left:1567px;top:394.5px;width:106px;height:38.5px;background:#000;border-radius:5px"></div><svg style="position:absolute;left:1612px;top:432px" width="16" height="6" viewBox="0 0 16 6"><path d="M0 0 H16 L8 6 Z" fill="#262626"/></svg><div class="t" style="left:1590.3px;top:406.00px;font-size:13px;color:#f2f2f2;font-weight:400;letter-spacing:0.27px;">Download</div></div>
</body></html>
